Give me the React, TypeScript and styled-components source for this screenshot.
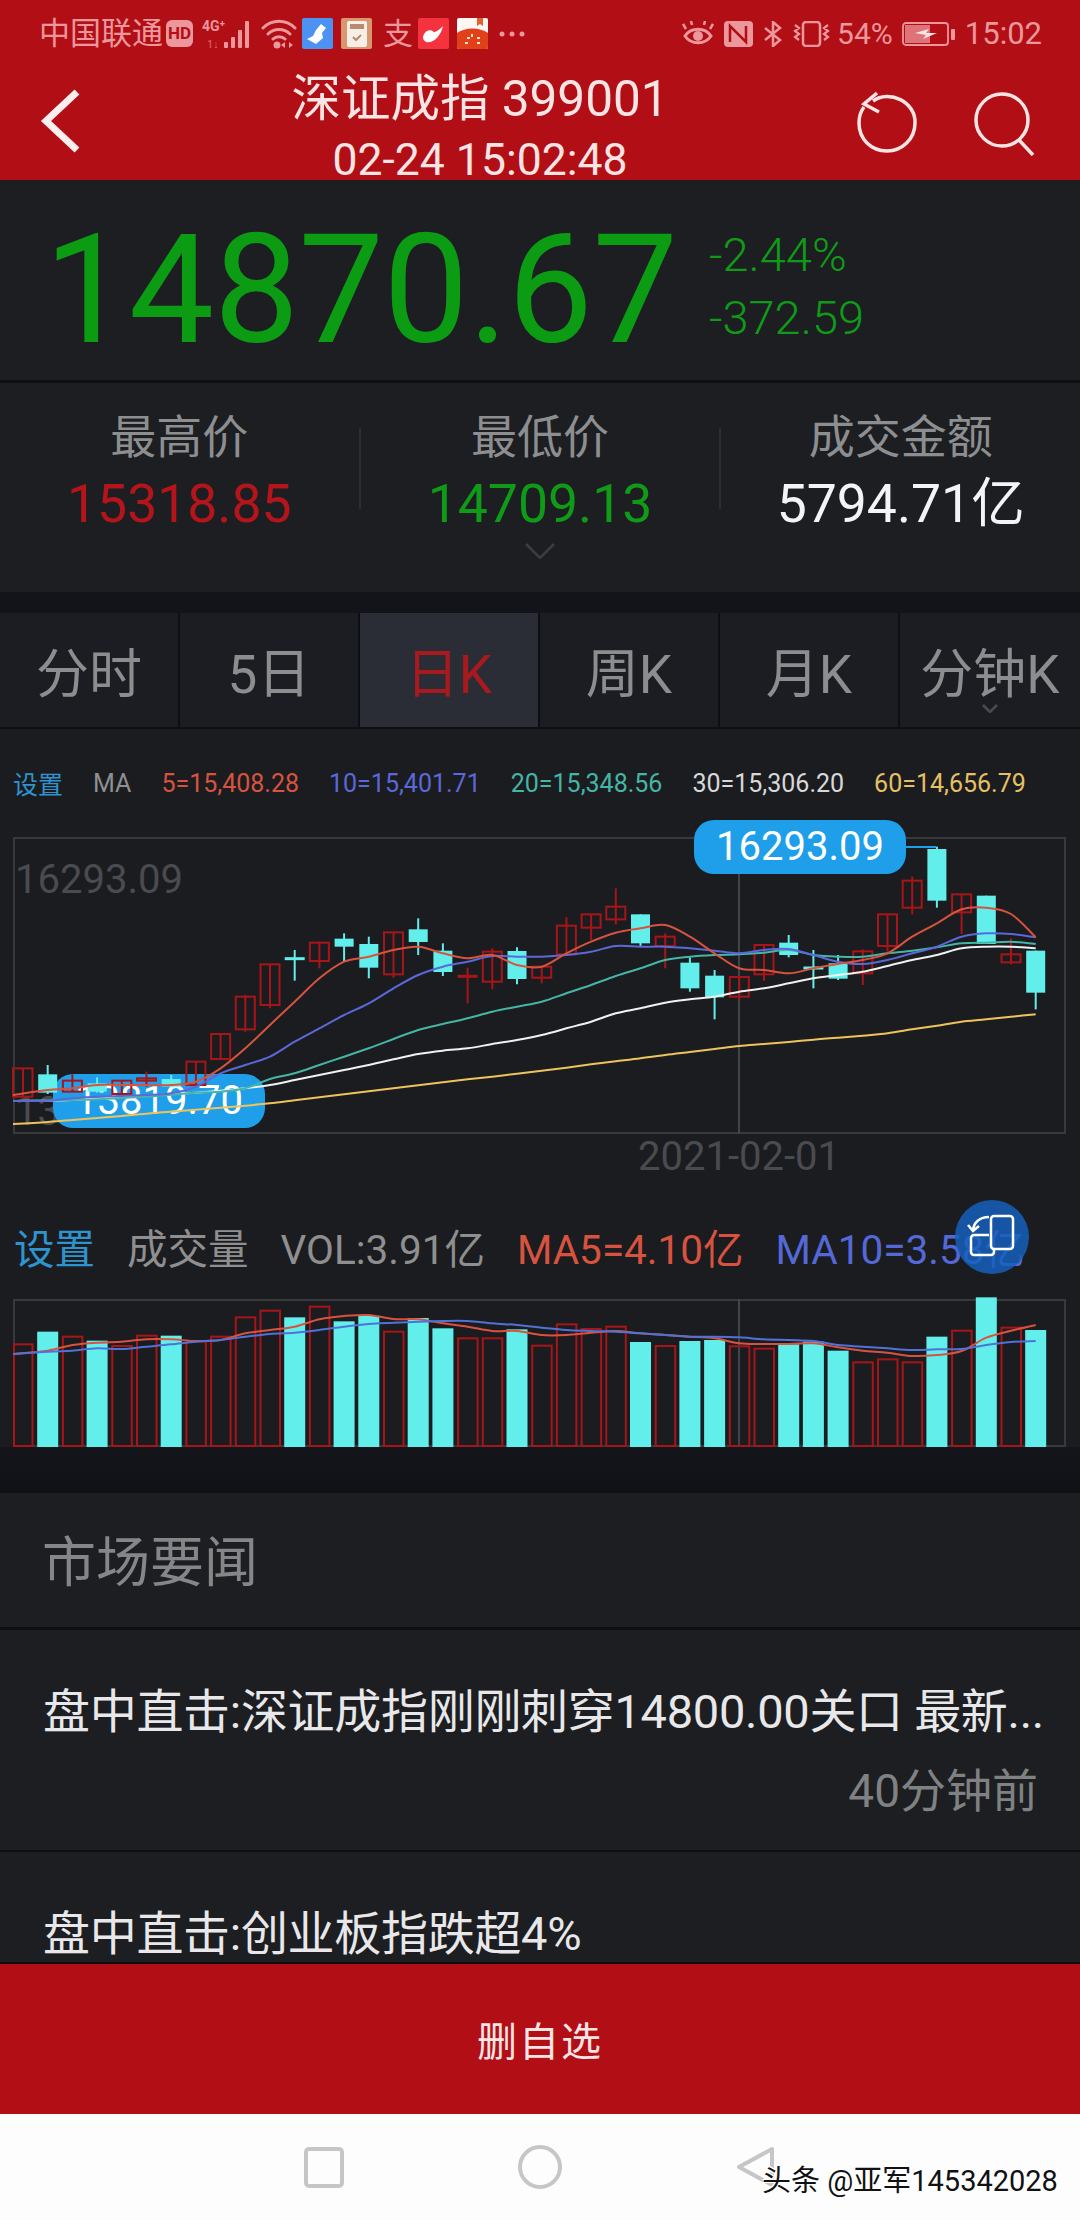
import styled, { createGlobalStyle } from "styled-components";

const GlobalStyle = createGlobalStyle`
  html, body {
    margin: 0;
    padding: 0;
    background: #1b1c20;
    font-family: Roboto, "Noto Sans CJK SC", sans-serif;
  }
  * { box-sizing: border-box; }
`;

const RED = "#b20e15";
const CYAN = "#62efec";
const CANDLE_RED = "#a81518";
const STATUS = "#ec979b";

const Phone = styled.div`
  position: relative;
  width: 1080px;
  height: 2220px;
  overflow: hidden;
  display: flex;
  flex-direction: column;
  background: #1b1c20;
`;

/* ---------- header ---------- */
const Header = styled.header`
  height: 180px;
  flex: none;
  background: ${RED};
`;

const StatusBar = styled.div`
  height: 66px;
  padding: 18px 38px 0 39px;
  display: flex;
  justify-content: space-between;
  align-items: flex-start;
  color: ${STATUS};
`;

const StatusGroup = styled.div`
  display: flex;
  align-items: center;
  height: 31px;
`;

const Carrier = styled.span`
  flex: none;
  font-size: 31px;
  line-height: 31px;
  width: 127px;
  white-space: nowrap;
`;

const HdBadge = styled.span`
  width: 27px;
  height: 27px;
  border-radius: 6px;
  background: ${STATUS};
  color: ${RED};
  font-size: 17px;
  font-weight: 700;
  line-height: 27px;
  text-align: center;
  margin-right: 9px;
`;

const AppTile = styled.div<{ $bg: string }>`
  width: 31px;
  height: 31px;
  flex: none;
  background: ${(p) => p.$bg};
  display: flex;
  align-items: center;
  justify-content: center;
  border-radius: 2px;
  margin-right: 8px;
  overflow: hidden;
`;

const AlipayGlyph = styled.span`
  width: 36px;
  margin-right: 2px;
  font-size: 30px;
  line-height: 31px;
  text-align: center;
`;

const BatteryText = styled.span`
  font-size: 30px;
  line-height: 31px;
  margin: 0 9px 0 7px;
`;

const ClockText = styled.span`
  font-size: 31px;
  line-height: 31px;
  margin-left: 9px;
`;

const TitleBar = styled.div`
  height: 114px;
  display: flex;
`;

const BackCell = styled.div`
  width: 120px;
  flex: none;
  padding: 22px 0 0 40px;
`;

const ActionCell = styled.div`
  flex: 1;
  display: flex;
  justify-content: flex-end;
  gap: 53px;
  padding: 24px 44px 0 0;
`;

const TitleBlock = styled.div`
  width: 720px;
  flex: none;
  padding-top: 2px;
  text-align: center;
  color: #fbe4e4;
`;

const TitleText = styled.div`
  font-size: 49.5px;
  line-height: 62px;
  white-space: nowrap;
`;

const TimeText = styled.div`
  font-size: 44.5px;
  line-height: 38px;
  margin-top: 11px;
  white-space: nowrap;
`;

/* ---------- quote ---------- */
const QuotePanel = styled.section`
  height: 203px;
  flex: none;
  padding: 20px 0 0 44px;
  display: flex;
  align-items: center;
  background: #1c1e22;
  border-bottom: 3px solid #0f1014;
`;

const BigPrice = styled.div`
  font-size: 152px;
  line-height: 160px;
  color: #0b9c14;
  width: 665px;
  letter-spacing: -0.6px;
`;

const ChangeColumn = styled.div`
  color: #0f9a17;
  font-size: 47px;
  line-height: 63px;
  font-weight: 300;
  margin-top: -8px;
`;

const StatsPanel = styled.section`
  height: 209px;
  flex: none;
  background: #1c1e22;
  padding-top: 25px;
`;

const StatsRow = styled.div`
  display: flex;
`;

const Stat = styled.div`
  flex: 1;
  text-align: center;
`;

const StatLabel = styled.div`
  font-size: 46px;
  line-height: 58px;
  color: #8d8e90;
`;

const StatValue = styled.div<{ $color: string }>`
  font-size: 53.5px;
  line-height: 70px;
  margin-top: 3px;
  color: ${(p) => p.$color};
`;

const StatDivider = styled.div`
  width: 2px;
  height: 81px;
  margin-top: 20px;
  background: #2d2e32;
`;

const ExpandHint = styled.div`
  display: flex;
  justify-content: center;
  margin-top: 4px;
`;

const Gap = styled.div`
  height: 21px;
  flex: none;
  background: #12141a;
`;

/* ---------- period tabs ---------- */
const TabBar = styled.nav`
  height: 116px;
  flex: none;
  display: grid;
  grid-template-columns: repeat(6, 1fr);
  background: #1b1d22;
  border-bottom: 2px solid #0e0f12;
`;

const Tab = styled.div<{ $active?: boolean }>`
  position: relative;
  display: flex;
  align-items: center;
  justify-content: center;
  font-size: 53px;
  white-space: nowrap;
  color: ${(p) => (p.$active ? "#a81a1e" : "#8c8d8f")};
  background: ${(p) => (p.$active ? "#2a2d35" : "transparent")};
  border-right: 2px solid #0e0f12;
  &:last-child { border-right: 0; }
`;

const TabCaret = styled.span`
  position: absolute;
  left: 50%;
  bottom: 14px;
  margin-left: -8px;
  line-height: 0;
`;

/* ---------- charts ---------- */
const ChartSection = styled.section`
  position: relative;
  height: 718px;
  flex: none;
  background: #1b1c20;
  padding: 34px 14px 0 13px;
`;

const MaRow = styled.div`
  height: 40px;
  display: flex;
  align-items: center;
  gap: 30px;
  font-size: 25px;
  white-space: nowrap;
`;

const Legend = styled.span<{ $color: string }>`
  color: ${(p) => p.$color};
`;

const Frame = styled.div<{ $height: number }>`
  position: relative;
  width: 1053px;
  height: ${(p) => p.$height}px;
  box-shadow: inset 0 0 0 2px #38393d;
`;

const PriceFrame = styled(Frame)`
  margin-top: 34px;
`;

const VolFrame = styled(Frame)`
  margin-top: 31px;
`;

const GreyLabel = styled.span<{ $top: number; $left: number }>`
  position: absolute;
  top: ${(p) => p.$top}px;
  left: ${(p) => p.$left}px;
  font-size: 40px;
  line-height: 46px;
  color: #4a4b4f;
  white-space: nowrap;
`;

const PricePill = styled.div<{ $top: number; $left: number; $over?: boolean }>`
  position: absolute;
  top: ${(p) => p.$top}px;
  left: ${(p) => p.$left}px;
  width: 212px;
  height: 54px;
  border-radius: 20px;
  background: #1f9fe9;
  color: #fff;
  font-size: 40px;
  line-height: 54px;
  text-align: center;
  z-index: ${(p) => (p.$over ? 3 : 1)};
`;

const ChartSvg = styled.svg`
  position: absolute;
  top: 0;
  left: 0;
  overflow: visible;
  z-index: 2;
`;

const VolRow = styled.div`
  height: 44px;
  margin-top: 90px;
  padding-left: 1px;
  display: flex;
  align-items: center;
  gap: 32px;
  font-size: 40.5px;
  white-space: nowrap;
`;

const RotateFab = styled.div`
  position: absolute;
  left: 955px;
  top: 471px;
  width: 74px;
  height: 74px;
  border-radius: 50%;
  background: rgba(21, 96, 189, 0.84);
  z-index: 4;
  display: flex;
  align-items: center;
  justify-content: center;
`;

/* ---------- news ---------- */
const NewsGap = styled.div`
  height: 46px;
  flex: none;
  background: linear-gradient(#14161b, #0f1117);
`;

const NewsTitle = styled.h2`
  height: 137px;
  flex: none;
  margin: 0;
  padding: 38px 0 0 42px;
  font-size: 54px;
  line-height: 66px;
  font-weight: 400;
  color: #858688;
  background: #1c1e22;
  border-bottom: 3px solid #0e0f12;
`;

const NewsItem = styled.article<{ $height: number }>`
  height: ${(p) => p.$height}px;
  flex: none;
  padding: 52px 40px 0 43px;
  background: #1c1e22;
  border-bottom: 2px solid #0e0f12;
  overflow: hidden;
`;

const NewsHeadline = styled.div`
  font-size: 47px;
  line-height: 60px;
  letter-spacing: -0.3px;
  color: #e8e8ea;
  white-space: nowrap;
`;

const NewsTime = styled.div`
  font-size: 46px;
  line-height: 60px;
  margin-top: 19px;
  color: #808183;
  text-align: right;
  padding-right: 2px;
`;

/* ---------- bottom ---------- */
const DeleteButton = styled.div`
  height: 150px;
  flex: none;
  background: ${RED};
  color: #f8e4e4;
  font-size: 40px;
  letter-spacing: 2px;
  display: flex;
  align-items: center;
  justify-content: center;
`;

const NavBar = styled.div`
  flex: 1;
  background: #fdfdfe;
  display: grid;
  grid-template-columns: repeat(3, 216px);
  justify-content: center;
  align-items: center;
  justify-items: center;
`;

const Watermark = styled.div`
  position: absolute;
  left: 762px;
  top: 2162px;
  font-size: 29px;
  line-height: 38px;
  color: #111;
  white-space: nowrap;
  text-shadow: 1px 1px 0 #fff, -1px -1px 0 #fff, 1px -1px 0 #fff, -1px 1px 0 #fff;
`;

// values below were read off the chart: [rising, wickTop, bodyTop, bodyBottom, wickBottom]
type Candle = [number, number, number, number, number];
const candles: Candle[] = [
  [1, 985, 985, 1070, 1070], [0, 975, 1003, 1058, 1062], [1, 1003, 1022, 1055, 1055],
  [0, 1012, 1030, 1055, 1058], [1, 1022, 1022, 1062, 1062], [1, 995, 1015, 1022, 1040],
  [0, 1005, 1017, 1040, 1040], [1, 965, 965, 1035, 1035], [1, 882, 882, 957, 957],
  [1, 765, 770, 868, 875], [1, 673, 673, 795, 805], [0, 630, 652, 660, 722],
  [1, 608, 608, 663, 685], [0, 580, 596, 620, 665], [0, 590, 612, 683, 715],
  [1, 577, 577, 703, 713], [0, 535, 568, 606, 645], [0, 610, 632, 696, 708],
  [1, 683, 705, 712, 790], [1, 625, 635, 725, 748], [0, 622, 633, 717, 733],
  [1, 680, 680, 713, 730], [1, 532, 557, 643, 643], [1, 523, 523, 563, 600],
  [1, 445, 500, 538, 553], [0, 523, 523, 610, 618], [1, 580, 590, 618, 685],
  [0, 652, 668, 745, 755], [0, 690, 707, 772, 838], [1, 711, 711, 770, 778],
  [1, 615, 615, 703, 723], [0, 585, 608, 645, 652], [0, 630, 680, 688, 745],
  [0, 645, 670, 716, 720], [1, 628, 634, 700, 735], [1, 523, 523, 618, 635],
  [1, 410, 422, 503, 523], [0, 320, 327, 482, 503], [1, 463, 463, 517, 582],
  [0, 467, 467, 612, 612], [1, 595, 643, 667, 673], [0, 632, 632, 758, 808],
];

const ma5 = [1065, 1050, 1045, 1035, 1035, 1035, 1035, 1025, 985, 925, 855, 785, 715, 665, 650, 630, 620, 640, 655, 645, 675, 680, 640, 605, 578, 565, 555, 590, 640, 685, 690, 700, 685, 672, 660, 640, 590, 550, 508, 503, 522, 592];
const ma10 = [1083, 1082, 1075, 1070, 1068, 1065, 1060, 1040, 1000, 975, 950, 905, 865, 825, 790, 745, 705, 680, 665, 648, 650, 650, 645, 635, 618, 620, 620, 625, 632, 640, 630, 627, 645, 665, 672, 660, 640, 620, 590, 580, 582, 592];
const ma20 = [1083, 1082, 1080, 1078, 1074, 1070, 1064, 1058, 1055, 1045, 1017, 1000, 975, 950, 925, 897, 870, 852, 835, 815, 800, 785, 760, 735, 708, 685, 660, 650, 645, 643, 638, 630, 645, 650, 650, 640, 632, 622, 610, 608, 605, 612];
const ma30 = [1083, 1082, 1080, 1076, 1072, 1068, 1062, 1058, 1052, 1045, 1035, 1020, 1005, 990, 975, 958, 942, 932, 925, 912, 900, 885, 865, 845, 820, 805, 788, 778, 770, 755, 745, 730, 715, 705, 695, 678, 660, 645, 625, 620, 620, 625];
const ma60 = [1152, 1146, 1140, 1134, 1128, 1121, 1115, 1109, 1103, 1097, 1090, 1081, 1072, 1063, 1054, 1045, 1036, 1027, 1018, 1010, 1001, 992, 983, 973, 964, 955, 945, 936, 927, 918, 912, 906, 899, 893, 887, 880, 868, 857, 845, 838, 830, 823];

const volTops = [553, 515, 530, 542, 558, 527, 527, 545, 530, 472, 452, 472, 440, 484, 468, 515, 474, 505, 535, 535, 508, 557, 493, 507, 500, 546, 558, 543, 540, 559, 566, 553, 545, 572, 607, 598, 607, 530, 512, 412, 503, 510];
const volMa5 = [582, 572, 555, 548, 545, 538, 538, 543, 540, 520, 510, 500, 478, 468, 465, 477, 478, 490, 500, 513, 513, 525, 525, 518, 513, 520, 525, 530, 535, 550, 552, 552, 550, 562, 572, 578, 588, 585, 573, 533, 512, 495];
const volMa10 = [582, 575, 572, 565, 567, 560, 553, 545, 540, 530, 522, 518, 510, 500, 492, 488, 485, 483, 483, 490, 495, 503, 510, 513, 515, 520, 525, 530, 530, 532, 538, 540, 543, 555, 560, 565, 570, 568, 567, 555, 546, 543];

const cx = (i: number) => 10 + 24.7 * i;
const priceY = (z: number) => z / 3 - 97;
const volY = (z: number) => z / 3 - 139;

// catmull-rom through the points, so the averages look like the app's curves
const smooth = (values: number[], toY: (z: number) => number) => {
  const pts = values.map((v, i) => [i === 0 ? 0 : cx(i), toY(v)]);
  let d = `M${pts[0][0]} ${pts[0][1]}`;
  for (let i = 0; i < pts.length - 1; i++) {
    const p0 = pts[i - 1] || pts[i];
    const p1 = pts[i];
    const p2 = pts[i + 1];
    const p3 = pts[i + 2] || p2;
    const c1 = [p1[0] + (p2[0] - p0[0]) / 6, p1[1] + (p2[1] - p0[1]) / 6];
    const c2 = [p2[0] - (p3[0] - p1[0]) / 6, p2[1] - (p3[1] - p1[1]) / 6];
    d += `C${c1[0].toFixed(1)} ${c1[1].toFixed(1)} ${c2[0].toFixed(1)} ${c2[1].toFixed(1)} ${p2[0].toFixed(1)} ${p2[1].toFixed(1)}`;
  }
  return d;
};

const priceLines: [number[], string][] = [
  [ma60, "#eec35c"],
  [ma30, "#f1f1f1"],
  [ma20, "#45b5a6"],
  [ma10, "#5a68d8"],
  [ma5, "#d8533f"],
];

const PriceChart = () => (
  <ChartSvg width={1053} height={297}>
    <line x1={726} y1={37} x2={726} y2={297} stroke="#434448" strokeWidth={2} />
    <path d="M893 10H923" stroke="#1f9fe9" strokeWidth={2} fill="none" />
    {candles.map(([up, wt, bt, bb, wb], i) => {
      const color = up ? CANDLE_RED : CYAN;
      return (
        <g key={i}>
          <line x1={cx(i)} y1={priceY(wt)} x2={cx(i)} y2={priceY(wb)} stroke={color} strokeWidth={2} />
          {i === 11 || i === 18 || i === 32 ? (
            <line x1={cx(i) - 10} y1={priceY(bt + 4)} x2={cx(i) + 10} y2={priceY(bt + 4)} stroke={color} strokeWidth={3} />
          ) : (
            <rect
              x={i === 0 ? 0 : cx(i) - 9.5}
              y={priceY(bt)}
              width={i === 0 ? 19.5 : 19}
              height={(bb - bt) / 3}
              fill={up ? "#1b1c20" : CYAN}
              fillOpacity={up ? 0 : 1}
              stroke={up ? CANDLE_RED : "none"}
              strokeWidth={2}
            />
          )}
        </g>
      );
    })}
    {priceLines.map(([values, color]) => (
      <path key={color} d={smooth(values, priceY)} fill="none" stroke={color} strokeWidth={2} />
    ))}
  </ChartSvg>
);

const VolumeChart = () => (
  <ChartSvg width={1053} height={148}>
    <line x1={726} y1={0} x2={726} y2={148} stroke="#434448" strokeWidth={2} />
    {volTops.map((top, i) => {
      const up = candles[i][0] === 1;
      const y = volY(top);
      return up ? (
        <rect key={i} x={i === 0 ? 1 : cx(i) - 9.5} y={y} width={i === 0 ? 18.5 : 19.5} height={147 - y} fill="none" stroke={CANDLE_RED} strokeWidth={2} />
      ) : (
        <rect key={i} x={cx(i) - 10.5} y={y} width={21} height={148 - y} fill={CYAN} />
      );
    })}
    <path d={smooth(volMa5, volY)} fill="none" stroke="#d8533f" strokeWidth={2} />
    <path d={smooth(volMa10, volY)} fill="none" stroke="#4f72d8" strokeWidth={2} />
  </ChartSvg>
);

const SignalIcon = () => (
  <svg width="52" height="31" viewBox="0 0 52 31">
    <text x="0" y="13" fontSize="14" fontWeight="700" fill={STATUS} fontFamily="Roboto, sans-serif">4G⁺</text>
    <text x="5" y="30" fontSize="11" fill="#d86a70" fontFamily="Roboto, sans-serif">1↓</text>
    <rect x="22" y="24" width="4" height="6" rx="1" fill={STATUS} />
    <rect x="29" y="19" width="4" height="11" rx="1" fill={STATUS} />
    <rect x="36" y="12" width="4" height="18" rx="1" fill={STATUS} />
    <rect x="43" y="3" width="4" height="27" rx="1" fill={STATUS} />
  </svg>
);

const WifiIcon = () => (
  <svg width="36" height="31" viewBox="0 0 36 31" style={{ marginLeft: 7, marginRight: 5 }}>
    <path d="M2 10C11 1 25 1 34 10M7 16C13 10 23 10 29 16M12 21C15 18 21 18 24 21" fill="none" stroke={STATUS} strokeWidth="3" strokeLinecap="round" />
    <circle cx="16" cy="27" r="3.5" fill={STATUS} />
    <path d="M24 24l-4 3 4 3zM28 24l4 3-4 3z" fill={STATUS} />
  </svg>
);

const EyeIcon = () => (
  <svg width="32" height="26" viewBox="0 0 32 26">
    <path d="M3 15C9 6 23 6 29 15C23 24 9 24 3 15Z" fill="none" stroke={STATUS} strokeWidth="3" />
    <circle cx="16" cy="15" r="5" fill={STATUS} />
    <path d="M4 8L1 3M28 8l3-5M10 4L9 0M22 4l1-4" stroke={STATUS} strokeWidth="2.5" />
  </svg>
);

const NfcIcon = () => (
  <svg width="29" height="26" viewBox="0 0 29 26" style={{ marginLeft: 10 }}>
    <rect width="29" height="26" rx="4" fill={STATUS} />
    <path d="M6 21V5L22 21V5" fill="none" stroke={RED} strokeWidth="2.5" />
  </svg>
);

const BluetoothIcon = () => (
  <svg width="20" height="26" viewBox="0 0 20 26" style={{ marginLeft: 10 }}>
    <path d="M2 7L17 19L10 25V1L17 7L2 19" fill="none" stroke={STATUS} strokeWidth="2.5" />
  </svg>
);

const VibrateIcon = () => (
  <svg width="37" height="26" viewBox="0 0 37 26" style={{ marginLeft: 10 }}>
    <rect x="10" y="1" width="17" height="24" rx="3" fill="none" stroke={STATUS} strokeWidth="2.5" />
    <path d="M2 4l4 3-4 3 4 3-4 3 4 3M35 4l-4 3 4 3-4 3 4 3-4 3" fill="none" stroke={STATUS} strokeWidth="2.2" />
  </svg>
);

const BatteryIcon = () => (
  <svg width="54" height="24" viewBox="0 0 54 24">
    <rect x="1" y="1" width="45" height="22" rx="3" fill="none" stroke={STATUS} strokeWidth="1.8" />
    <rect x="3" y="3" width="25" height="18" fill={STATUS} opacity="0.75" />
    <path d="M13 11L27 7L24 11H35L21 17L24 13Z" fill="#fbe4e4" />
    <rect x="49" y="7" width="4" height="11" rx="1" fill={STATUS} />
  </svg>
);

const BackIcon = () => (
  <svg width="42" height="66" viewBox="0 0 42 66">
    <path d="M37 4L6 33L37 62" fill="none" stroke="#fdeeee" strokeWidth="7" />
  </svg>
);

const RefreshIcon = () => (
  <svg width="64" height="64" viewBox="0 0 64 64">
    <path d="M18 11C34 -1 61 12 60 33C60 49 47 61 32 61C16 61 4 49 4 33C4 26 6 21 9 17" fill="none" stroke="#fbe4e4" strokeWidth="3.5" />
    <path d="M22 3L9 14L24 22" fill="none" stroke="#fbe4e4" strokeWidth="3.5" />
  </svg>
);

const SearchIcon = () => (
  <svg width="64" height="66" viewBox="0 0 64 66">
    <circle cx="30" cy="30" r="26" fill="none" stroke="#fbe4e4" strokeWidth="3.5" />
    <path d="M47 50L61 65" stroke="#fbe4e4" strokeWidth="3.5" />
  </svg>
);

const Chevron = ({ w, h, color }: { w: number; h: number; color: string }) => (
  <svg width={w} height={h} viewBox={`0 0 ${w} ${h}`}>
    <path d={`M1 1L${w / 2} ${h - 1}L${w - 1} 1`} fill="none" stroke={color} strokeWidth="2.5" />
  </svg>
);

const App = () => (
  <Phone>
    <GlobalStyle />
    <Header>
      <StatusBar>
        <StatusGroup>
          <Carrier>中国联通</Carrier>
          <HdBadge>HD</HdBadge>
          <SignalIcon />
          <WifiIcon />
          <AppTile $bg="#4b92f2">
            <svg width="24" height="24" viewBox="0 0 24 24">
              <path d="M15 2l5 4-4 5 1 5-7 6-9-5 6-3 3-6z" fill="#fff" />
            </svg>
          </AppTile>
          <AppTile $bg="#d9976f">
            <svg width="20" height="26" viewBox="0 0 20 26">
              <rect width="20" height="26" rx="2" fill="#f6efe8" />
              <rect x="3" y="3" width="14" height="5" fill="#b98a6e" />
              <path d="M6 16l3 3 5-5" fill="none" stroke="#b98a6e" strokeWidth="2" />
            </svg>
          </AppTile>
          <AlipayGlyph>支</AlipayGlyph>
          <AppTile $bg="#f4333f">
            <svg width="26" height="22" viewBox="0 0 26 22">
              <path d="M2 14C4 6 12 6 13 10C14 15 6 17 6 13C7 9 14 12 22 3C20 13 12 21 5 19C3 18 2 16 2 14Z" fill="#fff" />
            </svg>
          </AppTile>
          <AppTile $bg="#fdf6f2">
            <svg width="31" height="31" viewBox="0 0 31 31">
              <path d="M0 15C8 9 23 9 31 15V31H0Z" fill="#e2401a" />
              <path d="M20 0h6v8l-3-2-3 2z" fill="#e2612f" />
              <path d="M10 20h3M15 16v3M20 20h3M8 25h3M20 25h3" stroke="#fde3c8" strokeWidth="2" />
            </svg>
          </AppTile>
          <svg width="26" height="6" viewBox="0 0 26 6" style={{ marginLeft: 3 }}>
            <circle cx="3" cy="3" r="2.5" fill={STATUS} />
            <circle cx="13" cy="3" r="2.5" fill={STATUS} />
            <circle cx="23" cy="3" r="2.5" fill={STATUS} />
          </svg>
        </StatusGroup>
        <StatusGroup>
          <EyeIcon />
          <NfcIcon />
          <BluetoothIcon />
          <VibrateIcon />
          <BatteryText>54%</BatteryText>
          <BatteryIcon />
          <ClockText>15:02</ClockText>
        </StatusGroup>
      </StatusBar>
      <TitleBar>
        <BackCell>
          <BackIcon />
        </BackCell>
        <TitleBlock>
          <TitleText>深证成指 399001</TitleText>
          <TimeText>02-24 15:02:48</TimeText>
        </TitleBlock>
        <ActionCell>
          <RefreshIcon />
          <SearchIcon />
        </ActionCell>
      </TitleBar>
    </Header>

    <QuotePanel>
      <BigPrice>14870.67</BigPrice>
      <ChangeColumn>
        <div>-2.44%</div>
        <div>-372.59</div>
      </ChangeColumn>
    </QuotePanel>

    <StatsPanel>
      <StatsRow>
        <Stat>
          <StatLabel>最高价</StatLabel>
          <StatValue $color="#b5151a">15318.85</StatValue>
        </Stat>
        <StatDivider />
        <Stat>
          <StatLabel>最低价</StatLabel>
          <StatValue $color="#0f9a17">14709.13</StatValue>
        </Stat>
        <StatDivider />
        <Stat>
          <StatLabel>成交金额</StatLabel>
          <StatValue $color="#f4f4f6">5794.71亿</StatValue>
        </Stat>
      </StatsRow>
      <ExpandHint>
        <Chevron w={30} h={16} color="#3b3d42" />
      </ExpandHint>
    </StatsPanel>
    <Gap />

    <TabBar>
      <Tab>分时</Tab>
      <Tab>5日</Tab>
      <Tab $active>日K</Tab>
      <Tab>周K</Tab>
      <Tab>月K</Tab>
      <Tab>
        分钟K
        <TabCaret>
          <Chevron w={16} h={9} color="#4a4b50" />
        </TabCaret>
      </Tab>
    </TabBar>

    <ChartSection>
      <MaRow>
        <Legend $color="#2e94cf">设置</Legend>
        <Legend $color="#8f8f8f">MA</Legend>
        <Legend $color="#d8533f">5=15,408.28</Legend>
        <Legend $color="#5a68d8">10=15,401.71</Legend>
        <Legend $color="#45b5a6">20=15,348.56</Legend>
        <Legend $color="#d8d8d8">30=15,306.20</Legend>
        <Legend $color="#e6c064">60=14,656.79</Legend>
      </MaRow>
      <PriceFrame $height={297}>
        <GreyLabel $top={20} $left={2}>16293.09</GreyLabel>
        <GreyLabel $top={252} $left={2}>13819.70</GreyLabel>
        <GreyLabel $top={297} $left={625}>2021-02-01</GreyLabel>
        <PricePill $top={-17} $left={681} $over>16293.09</PricePill>
        <PricePill $top={237} $left={40}>13819.70</PricePill>
        <PriceChart />
      </PriceFrame>
      <VolRow>
        <Legend $color="#2e94cf">设置</Legend>
        <Legend $color="#8f8f8f">成交量</Legend>
        <Legend $color="#8f8f8f">VOL:3.91亿</Legend>
        <Legend $color="#d8533f">MA5=4.10亿</Legend>
        <Legend $color="#5468d8">MA10=3.58亿</Legend>
      </VolRow>
      <VolFrame $height={148}>
        <VolumeChart />
      </VolFrame>
      <RotateFab>
        <svg width="56" height="52" viewBox="0 0 56 52">
          <rect x="27" y="5" width="22" height="33" rx="3" fill="none" stroke="#fff" strokeWidth="2.5" />
          <path d="M25 24H10a3 3 0 0 0-3 3V41a3 3 0 0 0 3 3H27a3 3 0 0 0 3-3V38" fill="none" stroke="#fff" strokeWidth="2.5" />
          <path d="M25 6C16 6 10 11 9 19M4 14l5 6 6-5" fill="none" stroke="#fff" strokeWidth="2.5" />
        </svg>
      </RotateFab>
    </ChartSection>

    <NewsGap />
    <NewsTitle>市场要闻</NewsTitle>
    <NewsItem $height={222}>
      <NewsHeadline>盘中直击:深证成指刚刚刺穿14800.00关口 最新...</NewsHeadline>
      <NewsTime>40分钟前</NewsTime>
    </NewsItem>
    <NewsItem $height={112}>
      <NewsHeadline>盘中直击:创业板指跌超4%</NewsHeadline>
    </NewsItem>

    <DeleteButton>删自选</DeleteButton>
    <NavBar>
      <svg width="40" height="41" viewBox="0 0 40 41">
        <rect x="2" y="2" width="36" height="37" rx="3" fill="none" stroke="#c6c6c8" strokeWidth="4" />
      </svg>
      <svg width="44" height="44" viewBox="0 0 44 44">
        <circle cx="22" cy="22" r="20" fill="none" stroke="#c6c6c8" strokeWidth="4" />
      </svg>
      <svg width="40" height="42" viewBox="0 0 40 42">
        <path d="M36 3V39L3 21Z" fill="none" stroke="#c6c6c8" strokeWidth="4" strokeLinejoin="round" />
      </svg>
    </NavBar>
    <Watermark>头条 @亚军145342028</Watermark>
  </Phone>
);

export default App;
